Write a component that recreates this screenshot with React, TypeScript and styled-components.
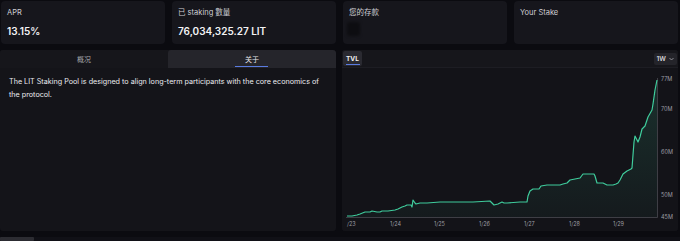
import styled, { createGlobalStyle } from 'styled-components';

const GlobalStyle = createGlobalStyle`
  html, body {
    margin: 0;
    padding: 0;
    background: #0b0b10;
  }
  body {
    font-family: Inter, "Noto Sans CJK SC", sans-serif;
    color: #e8e8ec;
    width: 680px;
    height: 241px;
    overflow: hidden;
  }
`;

const Page = styled.div`
  display: flex;
  flex-direction: column;
  height: 241px;
`;

const StatsRow = styled.div`
  display: grid;
  grid-template-columns: repeat(4, 1fr);
  gap: 7px;
  padding: 1px 2px 0 1px;
`;

const StatCard = styled.div`
  height: 43px;
  box-sizing: border-box;
  background: #16161c;
  border-radius: 4px;
  padding: 7px 6px 0;
  display: flex;
  flex-direction: column;
`;

const StatLabel = styled.div`
  font-size: 7.5px;
  line-height: 9px;
  color: #cfcfd4;
`;

const StatValue = styled.div`
  margin-top: 8px;
  font-size: 10px;
  line-height: 12px;
  font-weight: 600;
  color: #f2f2f4;
`;

const Hidden = styled.div`
  margin: 5px 0 0 -2px;
  width: 13px;
  height: 14px;
  border-radius: 3px;
  background: #0d0d11;
  filter: blur(1.5px);
`;

const PanelsRow = styled.div`
  display: grid;
  grid-template-columns: 336px 336px;
  gap: 6px;
  margin-top: 6px;
  height: 181px;
`;

const Panel = styled.div`
  background: #141419;
  border-radius: 3px;
  display: flex;
  flex-direction: column;
  overflow: hidden;
`;

const TabBar = styled.div`
  display: grid;
  grid-template-columns: 1fr 1fr;
  height: 18px;
  background: #16161b;
`;

const Tab = styled.div<{ $active?: boolean }>`
  position: relative;
  display: flex;
  align-items: center;
  justify-content: center;
  font-size: 7px;
  color: ${({ $active }) => ($active ? '#e6e6ea' : '#a4a4aa')};
  background: ${({ $active }) => ($active ? '#25252b' : 'transparent')};
  border-radius: 3px 3px 0 0;

  &::after {
    content: '';
    display: ${({ $active }) => ($active ? 'block' : 'none')};
    position: absolute;
    bottom: 1px;
    left: 50%;
    width: 33px;
    margin-left: -17px;
    height: 1px;
    background: #5a7be0;
  }
`;

const Description = styled.p`
  margin: 0;
  padding: 8px 9px;
  font-size: 7.2px;
  line-height: 12.5px;
  color: #ececf0;
`;

const ChartHeader = styled.div`
  display: flex;
  align-items: center;
  justify-content: space-between;
  height: 18px;
  padding: 0 1px 0 1px;
  background: #16161b;
  border-bottom: 1px solid #1d1d23;
  box-sizing: border-box;
`;

const MetricTab = styled.div`
  position: relative;
  height: 15px;
  padding: 0 3px;
  display: flex;
  align-items: center;
  font-size: 6.5px;
  font-weight: 700;
  color: #f0f0f2;
  background: #2a2a31;
  border-radius: 2px;

  &::after {
    content: '';
    position: absolute;
    left: 3px;
    right: 2px;
    bottom: 1px;
    height: 1px;
    background: #5a7be0;
  }
`;

const RangeButton = styled.div`
  height: 12px;
  padding: 0 3px;
  display: flex;
  align-items: center;
  gap: 3px;
  font-size: 6.5px;
  font-weight: 600;
  color: #d8d8dc;
  background: #24242a;
  border-radius: 2px;
`;

const ChartArea = styled.div`
  flex: 1;
  background: #131318;
`;

const ChartSvg = styled.svg`
  display: block;
  width: 336px;
  height: 163px;
`;

const Footer = styled.div`
  margin-top: auto;
  height: 4px;
  background: #101016;
  display: flex;
`;

const ScrollThumb = styled.div`
  width: 34px;
  height: 4px;
  background: #2c2c32;
  border-radius: 1px;
`;

const stats = [
  { label: 'APR', value: '13.15%' },
  { label: '已 staking 數量', value: '76,034,325.27 LIT' },
  { label: '您的存款', hidden: true },
  { label: 'Your Stake' },
];

const points: [number, number][] = [
  [347, 216], [352, 216], [357, 215], [360, 214], [365, 212], [370, 212], [372, 211],
  [377, 212], [380, 212], [382, 211], [388, 211], [395, 210], [398, 209], [402, 207],
  [405, 206], [407, 205], [411, 205], [412, 207], [413, 200], [415, 203], [416, 204],
  [420, 203], [427, 203], [440, 202], [473, 202], [490, 201], [491, 202], [494, 205],
  [498, 204], [500, 203], [502, 202], [504, 203], [507, 203], [520, 202], [527, 202],
  [528, 196], [530, 191], [533, 189], [539, 189], [541, 186], [547, 185], [560, 185],
  [563, 184], [567, 183], [570, 180], [575, 179], [580, 178], [583, 174], [594, 174],
  [595, 176], [597, 183], [603, 183], [607, 185], [613, 185], [616, 184], [618, 183],
  [620, 180], [623, 174], [627, 171], [631, 169], [632, 168], [633, 155], [634, 142],
  [635, 136], [637, 140], [638, 142], [640, 137], [642, 129], [645, 126], [648, 117],
  [652, 110], [653, 104], [655, 90], [657, 80],
];

const linePath = points.map(([x, y], i) => `${i ? 'L' : 'M'}${x},${y}`).join(' ');
const areaPath = `${linePath} L657,217 L347,217 Z`;

const yLabels = [
  { t: '77M', y: 79 },
  { t: '70M', y: 109 },
  { t: '60M', y: 152 },
  { t: '50M', y: 195.5 },
  { t: '45M', y: 217 },
];

const xLabels = [
  { t: '/23', x: 347 },
  { t: '1/24', x: 390 },
  { t: '1/25', x: 434 },
  { t: '1/26', x: 479 },
  { t: '1/27', x: 524 },
  { t: '1/28', x: 569 },
  { t: '1/29', x: 613 },
];

const TvlChart = () => (
  <ChartSvg viewBox="342 68 336 163">
    <defs>
      <linearGradient id="tvlFill" x1="0" y1="0" x2="0" y2="1">
        <stop offset="0%" stopColor="#3ecb9b" stopOpacity="0.16" />
        <stop offset="100%" stopColor="#3ecb9b" stopOpacity="0.04" />
      </linearGradient>
    </defs>
    <path d={areaPath} fill="url(#tvlFill)" />
    <line x1="657.5" y1="78" x2="657.5" y2="217.5" stroke="#4a4a52" strokeWidth="0.8" />
    <line x1="346" y1="217.5" x2="657.5" y2="217.5" stroke="#4a4a52" strokeWidth="0.8" />
    <path d={linePath} fill="none" stroke="#3fcc9c" strokeWidth="1.2" strokeLinejoin="round" />
    {yLabels.map((l) => (
      <text key={l.t} x="661" y={l.y} fontSize="5.5" fill="#9c9ca3" dominantBaseline="middle" fontFamily="Inter, sans-serif">
        {l.t}
      </text>
    ))}
    {xLabels.map((l) => (
      <text key={l.t} x={l.x} y="224.5" fontSize="5.5" fill="#9c9ca3" dominantBaseline="middle" fontFamily="Inter, sans-serif">
        {l.t}
      </text>
    ))}
  </ChartSvg>
);

export default function App() {
  return (
    <Page>
      <GlobalStyle />
      <StatsRow>
        {stats.map((s) => (
          <StatCard key={s.label}>
            <StatLabel>{s.label}</StatLabel>
            {s.value && <StatValue>{s.value}</StatValue>}
            {s.hidden && <Hidden />}
          </StatCard>
        ))}
      </StatsRow>
      <PanelsRow>
        <Panel>
          <TabBar>
            <Tab>概况</Tab>
            <Tab $active>关于</Tab>
          </TabBar>
          <Description>
            The LIT Staking Pool is designed to align long-term participants with the core economics of the protocol.
          </Description>
        </Panel>
        <Panel>
          <ChartHeader>
            <MetricTab>TVL</MetricTab>
            <RangeButton>
              1W
              <svg width="5" height="4" viewBox="0 0 5 4">
                <path d="M0.5 1 L2.5 3 L4.5 1" fill="none" stroke="#a8a8ae" strokeWidth="0.8" />
              </svg>
            </RangeButton>
          </ChartHeader>
          <ChartArea>
            <TvlChart />
          </ChartArea>
        </Panel>
      </PanelsRow>
      <Footer>
        <ScrollThumb />
      </Footer>
    </Page>
  );
}
